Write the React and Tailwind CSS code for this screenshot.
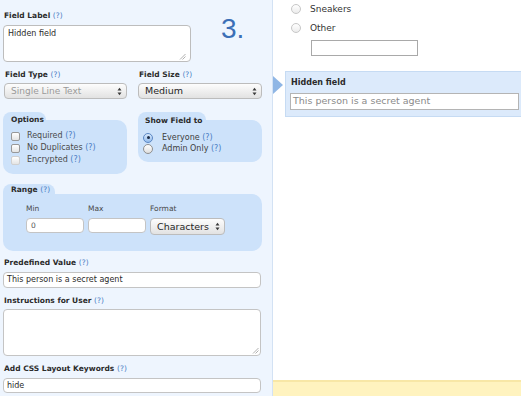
import React from 'react'

// ── small bits ─────────────────────────────────────────────
function Q() {
  return <span className="font-normal text-[#4a7dc4]">(?)</span>
}

function Label({ children, className = '' }) {
  return (
    <div className={`h-[10px] leading-[10px] pl-[1px] text-[7.5px] font-bold text-[#2b2b2b] whitespace-nowrap ${className}`}>
      {children} <Q />
    </div>
  )
}

function Arrows() {
  return (
    <svg width="5" height="9" viewBox="0 0 5 9" className="shrink-0">
      <polygon points="0.5,3.5 2.5,0.8 4.5,3.5" fill="#3a3a3a" />
      <polygon points="0.5,5.5 2.5,8.2 4.5,5.5" fill="#3a3a3a" />
    </svg>
  )
}

function Select({ value, muted = false, className = '', textSize = 'text-[9.5px]' }) {
  return (
    <div className={`h-[16px] rounded-[4px] border border-[#bcbcbc] bg-linear-to-b from-[#fdfdfd] to-[#e2e2e2] flex items-center justify-between pl-[6px] pr-[4px] ${className}`}>
      <span className={`${textSize} leading-none ${muted ? 'text-[#9a9a9a]' : 'text-[#262626]'}`}>{value}</span>
      <Arrows />
    </div>
  )
}

function Grip() {
  return (
    <svg width="7" height="7" viewBox="0 0 7 7" className="self-end">
      <line x1="1" y1="6.5" x2="6.5" y2="1" stroke="#9c9c9c" strokeWidth="0.8" />
      <line x1="3.5" y1="6.5" x2="6.5" y2="3.5" stroke="#9c9c9c" strokeWidth="0.8" />
    </svg>
  )
}

function Checkbox({ label, disabled = false }) {
  return (
    <div className="h-[12px] flex items-center gap-[7px]">
      <span className={`w-[9px] h-[9px] rounded-[2px] border bg-linear-to-b from-white to-[#e4e4e4] ${disabled ? 'border-[#d0d0d0]' : 'border-[#989898]'}`} />
      <span className="text-[8px] leading-none text-[#4a4a4a]">{label} <Q /></span>
    </div>
  )
}

function Radio({ label, checked = false }) {
  return (
    <div className="h-[11px] flex items-center gap-[9px]">
      {checked ? (
        <span className="w-[10px] h-[10px] rounded-full border border-[#5b87c4] bg-linear-to-b from-[#d9e9fc] to-[#94bcec] flex items-center justify-center">
          <span className="w-[3px] h-[3px] rounded-full bg-[#1c2b45]" />
        </span>
      ) : (
        <span className="w-[10px] h-[10px] rounded-full border border-[#8f8f8f] bg-linear-to-b from-white to-[#dedede]" />
      )}
      <span className="text-[8px] leading-none text-[#3e3e3e]">{label} <Q /></span>
    </div>
  )
}

// ── panels ─────────────────────────────────────────────────
function EditPanel() {
  return (
    <div className="w-[273px] shrink-0 h-[396px] overflow-hidden bg-[#eef5fe] border-r border-[#d3e2f4] pl-[3px] pt-[11px]">
      <div className="flex">
        <div className="w-[188px]">
          <Label>Field Label</Label>
          <div className="mt-[4px] h-[37px] rounded-[4px] border border-[#bdbdbd] bg-white flex flex-col justify-between px-[4px] pt-[3px] pb-[1px]">
            <span className="text-[8px] leading-[10px] text-[#2b2b2b]">Hidden field</span>
            <Grip />
          </div>
        </div>
        <div className="ml-[30px] mt-[4px] text-[28px] leading-none text-[#3b6fb7] font-['Liberation_Sans',sans-serif]">3.</div>
      </div>

      <div className="mt-[8px] flex gap-[11px] pl-[1px]">
        <div className="w-[123px]">
          <Label className="pl-0">Field Type</Label>
          <Select value="Single Line Text" muted textSize="text-[9px]" className="mt-[3px]" />
        </div>
        <div className="w-[124px]">
          <Label className="pl-0">Field Size</Label>
          <Select value="Medium" className="mt-[3px]" />
        </div>
      </div>

      <div className="mt-[13px] flex gap-[11px] items-start">
        <div className="w-[124px] flex flex-col">
          <div className="h-[8px] w-[43px] rounded-t-[8px] bg-[#cde2fa]" />
          <div className="bg-[#cde2fa] rounded-[10px] rounded-tl-none pl-[8px] pb-[8px]">
            <div className="-mt-[5px] h-[10px] leading-[10px] text-[7.5px] font-bold text-[#2b2b2b]">Options</div>
            <div className="mt-[5px]">
              <Checkbox label="Required" />
              <Checkbox label="No Duplicates" />
              <Checkbox label="Encrypted" disabled />
            </div>
          </div>
        </div>
        <div className="w-[124px] flex flex-col">
          <div className="h-[8px] w-[68px] rounded-t-[8px] bg-[#cde2fa]" />
          <div className="bg-[#cde2fa] rounded-[10px] rounded-tl-none pl-[5px] pb-[8px]">
            <div className="-mt-[4px] pl-[2px] h-[10px] leading-[10px] text-[7.5px] font-bold text-[#2b2b2b]">Show Field to</div>
            <div className="mt-[6px]">
              <Radio label="Everyone" checked />
              <Radio label="Admin Only" />
            </div>
          </div>
        </div>
      </div>

      <div className="mt-[10px] w-[259px] flex flex-col">
        <div className="h-[10px] w-[52px] rounded-t-[8px] bg-[#cde2fa]" />
        <div className="bg-[#cde2fa] rounded-[10px] rounded-tl-none pb-[16px]">
          <Label className="-mt-[9px] pl-[8px]">Range</Label>
          <div className="mt-[9px] flex gap-[4px] pl-[23px]">
            <div className="w-[58px]">
              <div className="h-[10px] leading-[10px] text-[7.5px] text-[#4a4a4a]">Min</div>
              <div className="mt-[4px] h-[15px] rounded-[4px] border border-[#c4c4c4] bg-white flex items-center px-[4px] text-[7.5px] text-[#555]">0</div>
            </div>
            <div className="w-[58px]">
              <div className="h-[10px] leading-[10px] text-[7.5px] text-[#4a4a4a]">Max</div>
              <div className="mt-[4px] h-[15px] rounded-[4px] border border-[#c4c4c4] bg-white" />
            </div>
            <div className="w-[75px]">
              <div className="h-[10px] leading-[10px] text-[7.5px] text-[#4a4a4a]">Format</div>
              <Select value="Characters" className="mt-[4px] h-[17px]" />
            </div>
          </div>
        </div>
      </div>

      <Label className="mt-[7px]">Predefined Value</Label>
      <div className="mt-[4px] w-[258px] h-[16px] rounded-[4px] border border-[#c4c4c4] bg-white flex items-center px-[3px] text-[8px] text-[#2b2b2b] whitespace-nowrap">
        This person is a secret agent
      </div>

      <Label className="mt-[8px]">Instructions for User</Label>
      <div className="mt-[3px] w-[258px] h-[47px] rounded-[4px] border border-[#c4c4c4] bg-white flex justify-end items-end pr-[1px] pb-[1px]">
        <Grip />
      </div>

      <Label className="mt-[8px]">Add CSS Layout Keywords</Label>
      <div className="mt-[4px] w-[258px] h-[15px] rounded-[4px] border border-[#c4c4c4] bg-white flex items-center px-[3px] text-[8px] text-[#2b2b2b]">
        hide
      </div>
    </div>
  )
}

function PlainRadio({ label }) {
  return (
    <div className="h-[12px] flex items-center gap-[9px] pl-[18px]">
      <span className="w-[10px] h-[10px] rounded-full border border-[#c7c7c7] bg-linear-to-b from-white to-[#ececec]" />
      <span className="text-[9px] leading-none text-[#333]">{label}</span>
    </div>
  )
}

function PreviewPanel() {
  return (
    <div className="flex-1 h-[396px] bg-white flex flex-col">
      <div className="pt-[3px]">
        <PlainRadio label="Sneakers" />
        <div className="mt-[7px]">
          <PlainRadio label="Other" />
        </div>
        <div className="mt-[6px] ml-[38px] w-[107px] h-[16px] border border-[#a9a9a9] bg-white" />
      </div>

      <div className="mt-[15px] flex items-start">
        <svg width="10" height="18" viewBox="0 0 10 18" className="mt-[5px] shrink-0">
          <polygon points="0,0 10,9 0,18" fill="#8fb6e5" />
        </svg>
        <div className="ml-[2px] flex-1 bg-[#dceafb] border border-r-0 border-[#c6dbf3] pl-[4px] pr-[2px] pt-[6px] pb-[6px]">
          <div className="pl-[1px] h-[10px] leading-[10px] text-[8px] font-bold text-[#2b2b2b]">Hidden field</div>
          <div className="mt-[5px] h-[17px] border border-[#b4b4b4] bg-white flex items-center px-[2px] text-[9.5px] text-[#8a8a8a] whitespace-nowrap">
            This person is a secret agent
          </div>
        </div>
      </div>

      <div className="flex-1" />
      <div className="h-[16px] bg-[#fff3bf] border-t-2 border-[#f8e7a6]" />
    </div>
  )
}

export default function App() {
  return (
    <div className="w-[521px] h-[396px] overflow-hidden flex font-['DejaVu_Sans',sans-serif]">
      <EditPanel />
      <PreviewPanel />
    </div>
  )
}
